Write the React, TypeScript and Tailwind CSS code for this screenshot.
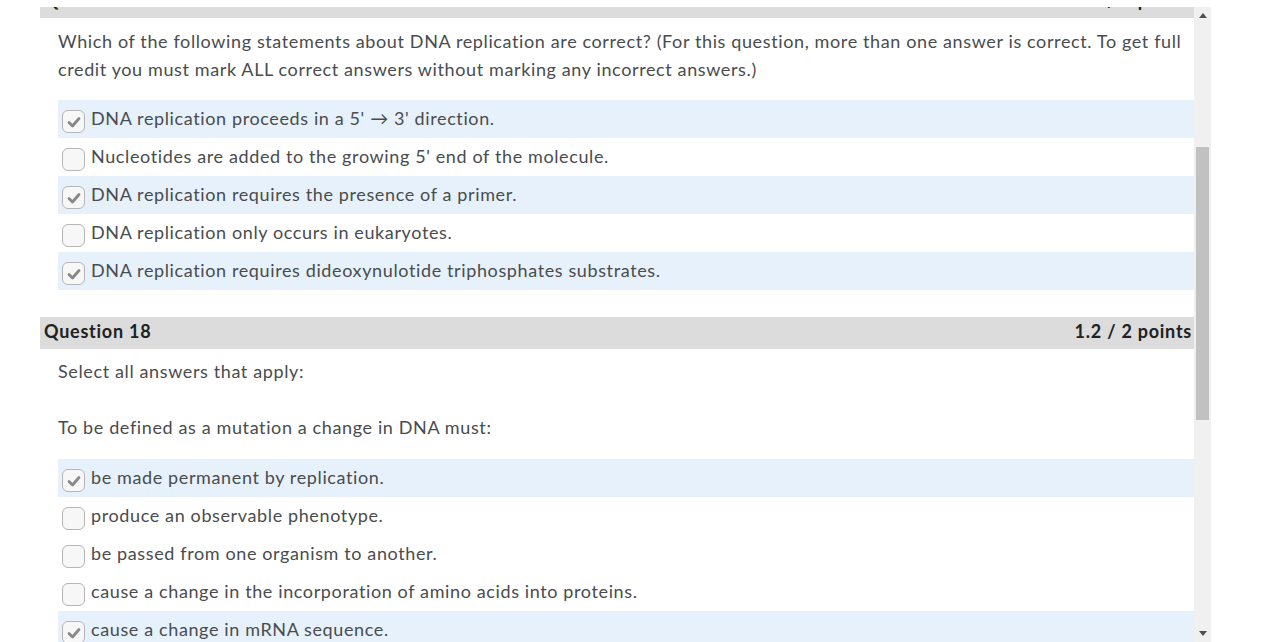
import clsx from "clsx";

type Option = { text: string; checked: boolean };

const q17Options: Option[] = [
  { text: "DNA replication proceeds in a 5' \u2192 3' direction.", checked: true },
  { text: "Nucleotides are added to the growing 5' end of the molecule.", checked: false },
  { text: "DNA replication requires the presence of a primer.", checked: true },
  { text: "DNA replication only occurs in eukaryotes.", checked: false },
  { text: "DNA replication requires dideoxynulotide triphosphates substrates.", checked: true },
];

const q18Options: Option[] = [
  { text: "be made permanent by replication.", checked: true },
  { text: "produce an observable phenotype.", checked: false },
  { text: "be passed from one organism to another.", checked: false },
  { text: "cause a change in the incorporation of amino acids into proteins.", checked: false },
  { text: "cause a change in mRNA sequence.", checked: true },
];

function Checkbox({ checked }: { checked: boolean }) {
  return (
    <span className="mt-[6px] flex h-[23px] w-[23px] shrink-0 items-center justify-center rounded-[6px] border border-[#b5b5b5] bg-[#f7f7f7]">
      {checked && (
        <svg width="14" height="12" viewBox="0 0 14 12">
          <path d="M2 6.5 L5.5 10 L12 2.5" fill="none" stroke="#888888" strokeWidth="2.8" strokeLinecap="round" strokeLinejoin="round" />
        </svg>
      )}
    </span>
  );
}

function OptionList({ options }: { options: Option[] }) {
  return (
    <div className="flex flex-col">
      {options.map((o) => (
        <div
          key={o.text}
          className={clsx("flex h-[38px] items-start gap-[6px] pl-[4px] pt-[4px]", o.checked ? "bg-[#e7f1fc]" : "bg-white")}
        >
          <Checkbox checked={o.checked} />
          <span>{o.text}</span>
        </div>
      ))}
    </div>
  );
}

function Header({ title, points }: { title: string; points: string }) {
  return (
    <div className="flex h-[32px] shrink-0 items-center justify-between bg-[#dcdcdc] pb-[4px] pl-[4px] pr-[2px] font-bold tracking-[0.75px] text-[#202122]">
      <span>{title}</span>
      <span>{points}</span>
    </div>
  );
}

function Arrow({ up }: { up: boolean }) {
  return (
    <svg width="8" height="5" viewBox="0 0 8 5" className="mx-auto">
      <path d={up ? "M0 5 L4 0 L8 5 Z" : "M0 0 L4 5 L8 0 Z"} fill="#505050" />
    </svg>
  );
}

export default function App() {
  return (
    <div
      className="flex h-[642px] w-full overflow-hidden bg-white pt-[7px] text-[18px] leading-[28px] tracking-[0.62px] text-[#494c4e] [font-variant-ligatures:none]"
      style={{ fontFamily: "Lato, 'Noto Sans', sans-serif" }}
    >
      <div className="w-[40px] shrink-0" />
      <div className="flex w-[1154px] shrink-0 flex-col">
        <div className="h-[11px] shrink-0 overflow-hidden">
          <div className="-mt-[21px]">
            <Header title="Question 17" points="2 / 2 points" />
          </div>
        </div>
        <div className="pl-[18px]">
          <p className="pt-[9px]">
            Which of the following statements about DNA replication are correct? (For this question, more than one answer is correct. To get full credit you must mark ALL correct answers without marking any incorrect answers.)
          </p>
          <div className="mt-[17px]">
            <OptionList options={q17Options} />
          </div>
        </div>
        <div className="mt-[27px]">
          <Header title="Question 18" points="1.2 / 2 points" />
        </div>
        <div className="pl-[18px]">
          <p className="mt-[8px]">Select all answers that apply:</p>
          <p className="mt-[28px]">To be defined as a mutation a change in DNA must:</p>
          <div className="mt-[18px]">
            <OptionList options={q18Options} />
          </div>
        </div>
      </div>
      <div className="flex w-[17px] shrink-0 flex-col bg-[#f0f0f0]">
        <div className="flex h-[17px] shrink-0 items-center">
          <Arrow up />
        </div>
        <div className="mx-[2px] mt-[123px] h-[273px] shrink-0 bg-[#c1c1c1]" />
        <div className="flex-1" />
        <div className="flex h-[17px] shrink-0 items-center">
          <Arrow up={false} />
        </div>
      </div>
      <div className="flex-1" />
    </div>
  );
}
